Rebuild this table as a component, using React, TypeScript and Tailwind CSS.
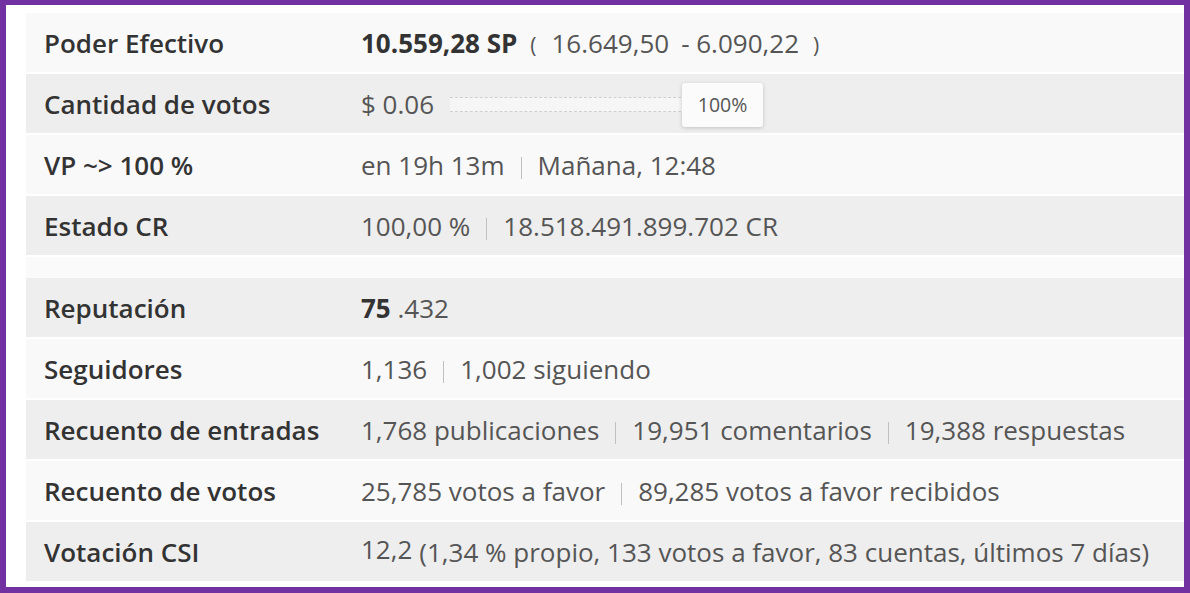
import React from 'react';

const Sep = () => <span className="inline-block w-px h-[22px] bg-[#c0c0c0] mx-[16px] align-[-4px]" />;

type Row = { label: string; value: React.ReactNode };

const topRows: Row[] = [
  {
    label: 'Poder Efectivo',
    value: (
      <>
        <span className="font-bold text-[#333]">10.559,28 SP</span>
        <span className="text-[21px] ml-[13px] mr-[15px] text-[#555]">(</span>
        16.649,50
        <span className="ml-[12px]">- 6.090,22</span>
        <span className="text-[21px] ml-[14px] text-[#555]">)</span>
      </>
    ),
  },
  {
    label: 'Cantidad de votos',
    value: (
      <div className="flex items-center">
        <span>$ 0.06</span>
        <div className="relative ml-[16px] flex items-center">
          <div className="w-[236px] h-[15px] border-y border-dashed border-[#cfcfcf] bg-[#f6f6f6]" />
          <div className="absolute left-[232px] -top-[14px] w-[81px] h-[44px] bg-[#fbfbfb] rounded-[3px] shadow-[0_1px_4px_rgba(0,0,0,0.18)] flex items-center justify-center text-[19.5px] text-[#555]">
            100%
          </div>
        </div>
      </div>
    ),
  },
  {
    label: 'VP ~> 100 %',
    value: (
      <>
        en 19h 13m<Sep />Mañana, 12:48
      </>
    ),
  },
  {
    label: 'Estado CR',
    value: (
      <>
        100,00 %<Sep />18.518.491.899.702 CR
      </>
    ),
  },
];

const bottomRows: Row[] = [
  {
    label: 'Reputación',
    value: (
      <>
        <span className="font-bold text-[#333]">75</span> .432
      </>
    ),
  },
  {
    label: 'Seguidores',
    value: (
      <>
        1,136<Sep />1,002 siguiendo
      </>
    ),
  },
  {
    label: 'Recuento de entradas',
    value: (
      <>
        1,768 publicaciones<Sep />19,951 comentarios<Sep />19,388 respuestas
      </>
    ),
  },
  {
    label: 'Recuento de votos',
    value: (
      <>
        25,785 votos a favor<Sep />89,285 votos a favor recibidos
      </>
    ),
  },
  {
    label: 'Votación CSI',
    value: (
      <>
        <span className="inline-block -translate-y-[3px] mr-[7px]">12,2</span>(1,34 % propio, 133 votos a favor, 83 cuentas, últimos 7 días)
      </>
    ),
  },
];

function StatRow({ row, odd }: { row: Row; odd: boolean }) {
  return (
    <div className={`flex items-center h-[59px] mb-[2px] pt-[1px] ${odd ? 'bg-[#f9f9f9]' : 'bg-[#eeeeee]'}`}>
      <div className="w-[317px] pl-[18px] shrink-0 font-semibold text-[#333]">{row.label}</div>
      <div className="pl-[18px] text-[#555] whitespace-nowrap">{row.value}</div>
    </div>
  );
}

export default function App() {
  return (
    <div
      className="w-[1190px] h-[593px] bg-white border-[6px] border-t-[5px] border-[#7131a0] pl-[20px] pt-[8px] overflow-hidden text-[26px] leading-none"
      style={{ fontFamily: '"Open Sans", "Noto Sans", sans-serif' }}
    >
      {topRows.map((r, i) => (
        <StatRow key={r.label} row={r} odd={i % 2 === 0} />
      ))}
      <div className="h-[21px] bg-[#fafafa]" />
      {bottomRows.map((r, i) => (
        <StatRow key={r.label} row={r} odd={i % 2 === 1} />
      ))}
    </div>
  );
}
